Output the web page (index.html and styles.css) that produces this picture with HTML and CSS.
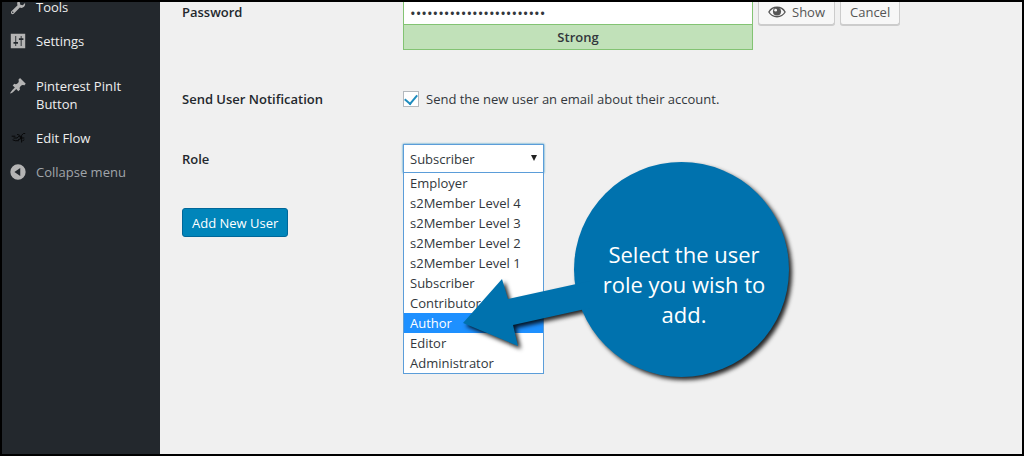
FILE: index.html
```
<!DOCTYPE html>
<html lang="en">
<head>
    <meta charset="UTF-8">
    <meta name="viewport" content="width=device-width, initial-scale=1.0">
    <title>Add New User</title>
    <link rel="stylesheet" href="styles.css">
</head>
<body>
    <div class="admin">
        <nav class="menu">
            <a class="menu-item" href="#">
                <svg class="menu-icon" viewBox="0 0 20 20"><path d="M16.700 9.800c-1.300 1.300-3.100 1.600-4.600.8L5.300 17.400c-.7.7-1.900.7-2.600 0s-.7-1.900 0-2.600L9.500 8c-.8-1.500-.5-3.400.8-4.700 1.100-1.100 2.700-1.500 4.100-1.100L11.900 4.700l.7 2.700 2.700.7 2.500-2.500c.4 1.500 0 3.100-1.100 4.200zM4.700 16.400c.4-.4.4-.9 0-1.200-.3-.3-.8-.3-1.100 0-.3.3-.3.9 0 1.200.3.3.8.3 1.100 0z"/></svg>
                <span>Tools</span>
            </a>
            <a class="menu-item" href="#">
                <svg class="menu-icon" viewBox="0 0 20 20"><path fill-rule="evenodd" d="M18 18V2H2v16h16zM8 11h2v2H8v2.500H7V13H5v-2h2V4.500h1V11zm5-2h-2V7h2V4.500h1V7h2v2h-2v6.500h-1V9z"/></svg>
                <span>Settings</span>
            </a>
            <a class="menu-item plugins" href="#">
                <svg class="menu-icon" viewBox="0 0 20 20"><path d="M10.440 3.020l1.820-1.820 6.360 6.350-1.830 1.820c-1.050-.68-2.480-.57-3.410.36l-.75.75c-.92.930-1.040 2.350-.35 3.410l-1.830 1.820-2.410-2.410-2.800 2.790c-.42.420-3.380 2.710-3.800 2.290s1.860-3.390 2.280-3.810l2.790-2.790L4.100 9.360l1.830-1.820c1.050.69 2.480.570 3.400-.36l.75-.75c.93-.92 1.050-2.350.360-3.410z"/></svg>
                <span>Pinterest PinIt Button</span>
            </a>
            <a class="menu-item" href="#">
                <svg class="menu-icon flow" viewBox="0 0 20 20"><path d="M3 8h4M5 10h4l2-2h2v3l-3 1M4 12l3 1h4M14 15V7l2-2h2M12 10h5M9 6l3 1M15 13l2-1"/></svg>
                <span>Edit Flow</span>
            </a>
            <a class="menu-item collapse" href="#">
                <svg class="menu-icon" viewBox="0 0 20 20"><path fill-rule="evenodd" d="M10 1.500a8.500 8.500 0 1 0 0 17a8.500 8.500 0 0 0 0-17zM12.500 5.500v9L6 10z"/></svg>
                <span>Collapse menu</span>
            </a>
        </nav>

        <main class="content">
            <form class="user-form">
                <div class="form-row password-row">
                    <label class="label" for="password">Password</label>
                    <div class="password">
                        <div class="password-box">
                            <input class="password-input" id="password" type="password" value="aB3dE6gH9jK2mN5pQ8sT1vW4">
                            <div class="strength">Strong</div>
                        </div>
                        <button class="button" type="button">
                            <svg class="eye" viewBox="0 0 20 14"><path d="M1 7c4-7 14-7 18 0c-4 7-14 7-18 0z" fill="none" stroke="currentColor" stroke-width="1.500"/><circle cx="10" cy="6.500" r="4.500"/><circle cx="8.500" cy="5" r="1.500" fill="#f7f7f7"/></svg>
                            <span>Show</span>
                        </button>
                        <button class="button" type="button">Cancel</button>
                    </div>
                </div>

                <div class="form-row">
                    <span class="label">Send User Notification</span>
                    <label class="check">
                        <input class="check-input" type="checkbox" checked>
                        <span>Send the new user an email about their account.</span>
                    </label>
                </div>

                <div class="form-row">
                    <label class="label" for="role">Role</label>
                    <div class="role">
                        <select class="role-select" id="role">
                            <option>Subscriber</option>
                        </select>
                        <ul class="role-list">
                            <li>Employer</li>
                            <li>s2Member Level 4</li>
                            <li>s2Member Level 3</li>
                            <li>s2Member Level 2</li>
                            <li>s2Member Level 1</li>
                            <li>Subscriber</li>
                            <li>Contributor</li>
                            <li class="active">Author</li>
                            <li>Editor</li>
                            <li>Administrator</li>
                        </ul>
                        <!-- callout pointing at the Author option -->
                        <div class="callout">
                            <svg class="callout-shape" viewBox="0 0 340 230">
                                <circle cx="221.500" cy="111.500" r="107.500"/>
                                <path d="M3 165L42 121L48 141L130 123V150L53 167L58 188z"/>
                            </svg>
                            <p class="callout-text">Select the user role you wish to add.</p>
                        </div>
                    </div>
                </div>

                <button class="submit" type="submit">Add New User</button>
            </form>
        </main>
    </div>
</body>
</html>
```

FILE: styles.css
```
*{
    padding: 0;
    margin: 0;
    box-sizing: border-box;
}
body{
    font-family: "Open Sans", "Noto Sans", sans-serif;
    font-size: 13px;
    line-height: 20px;
    color: #32373c;
}
button, input, select{
    font: inherit;
    color: inherit;
}
.admin{
    display: flex;
    min-height: 100vh;
    overflow: hidden;
    border: 2px solid #000;
    background: #f0f0f0;
}

/* side menu */
.menu{
    flex: none;
    width: 158px;
    margin-top: -12px;
    background: #23282d;
}
.menu-item{
    display: flex;
    gap: 8px;
    padding: 8px 6px;
    line-height: 18px;
    color: #eee;
    text-decoration: none;
}
.menu-item.plugins{
    margin-top: 11px;
}
.menu-item.collapse{
    color: #a0a5aa;
}
.menu-icon{
    flex: none;
    width: 20px;
    height: 18px;
    fill: #b4b4b4;
}
.menu-icon.flow{
    fill: none;
    stroke: #050505;
    stroke-width: 1;
}

/* form */
.content{
    flex: 1;
    padding: 0 22px;
}
.user-form{
    display: flex;
    flex-direction: column;
    align-items: flex-start;
    gap: 35px;
}
.form-row{
    display: flex;
    align-items: center;
    width: 100%;
}
.password-row{
    align-items: flex-start;
    min-height: 52px;
}
.label{
    flex: none;
    width: 221px;
    font-weight: 600;
    color: #23282d;
}
.password{
    display: flex;
    align-items: flex-start;
    gap: 5px;
}
.password-box{
    width: 350px;
}
.password-input{
    display: block;
    width: 100%;
    height: 22px;
    padding: 0 6px;
    border: 1px solid #83c373;
    border-width: 0 1px;
    background: #fff;
    font-size: 15px;
}
.strength{
    height: 26px;
    border: 1px solid #83c373;
    background: #c1e1b9;
    line-height: 25px;
    font-weight: 600;
    text-align: center;
}
.button{
    display: flex;
    align-items: center;
    gap: 6px;
    height: 23px;
    padding: 0 9px 3px;
    border: 1px solid #ccc;
    border-top: 0;
    border-radius: 0 0 3px 3px;
    background: #f7f7f7;
    box-shadow: 0 1px 0 #ccc;
    color: #555;
}
.eye{
    width: 18px;
    height: 14px;
    fill: currentColor;
}
.check{
    display: flex;
    align-items: center;
    gap: 7px;
}
.check-input{
    display: grid;
    place-items: center;
    width: 16px;
    height: 16px;
    appearance: none;
    border: 1px solid #b4b9be;
    background: #fff;
}
.check-input:checked::before{
    content: "";
    width: 6px;
    height: 10px;
    margin-bottom: 2px;
    border: solid #1e8cbe;
    border-width: 0 2px 2px 0;
    transform: rotate(40deg);
}
.role{
    position: relative;
    width: 141px;
}
.role-select{
    display: block;
    width: 100%;
    height: 29px;
    padding: 0 6px;
    appearance: none;
    border: 1px solid #5b9dd9;
    box-shadow: 0 0 2px #1e8cbe;
    background: #fff;
    outline: 0;
}
.role::before{
    content: "";
    position: absolute;
    top: 11px;
    right: 7px;
    border: solid transparent;
    border-width: 6px 3px 0;
    border-top-color: #222;
}
.role-list{
    position: absolute;
    top: 28px;
    left: 0;
    width: 100%;
    border: 1px solid #5b9dd9;
    background: #fff;
    list-style: none;
}
.role-list li{
    padding: 0 6px;
}
.role-list .active{
    background: #1e90ff;
    color: #fff;
}
.submit{
    height: 29px;
    padding: 0 9px;
    border: 1px solid #006799;
    border-radius: 3px;
    background: #0085ba;
    color: #fff;
}

/* callout */
.callout{
    position: absolute;
    top: 14px;
    left: 57px;
    width: 340px;
    height: 230px;
}
.callout-shape{
    display: block;
    width: 100%;
    overflow: visible;
    fill: #0072ae;
    filter: drop-shadow(3px 3px 2px rgba(0, 0, 0, 0.85));
}
.callout-text{
    position: absolute;
    top: 81px;
    left: 132px;
    width: 184px;
    font-size: 22px;
    line-height: 30px;
    text-align: center;
    color: #fff;
}
```
